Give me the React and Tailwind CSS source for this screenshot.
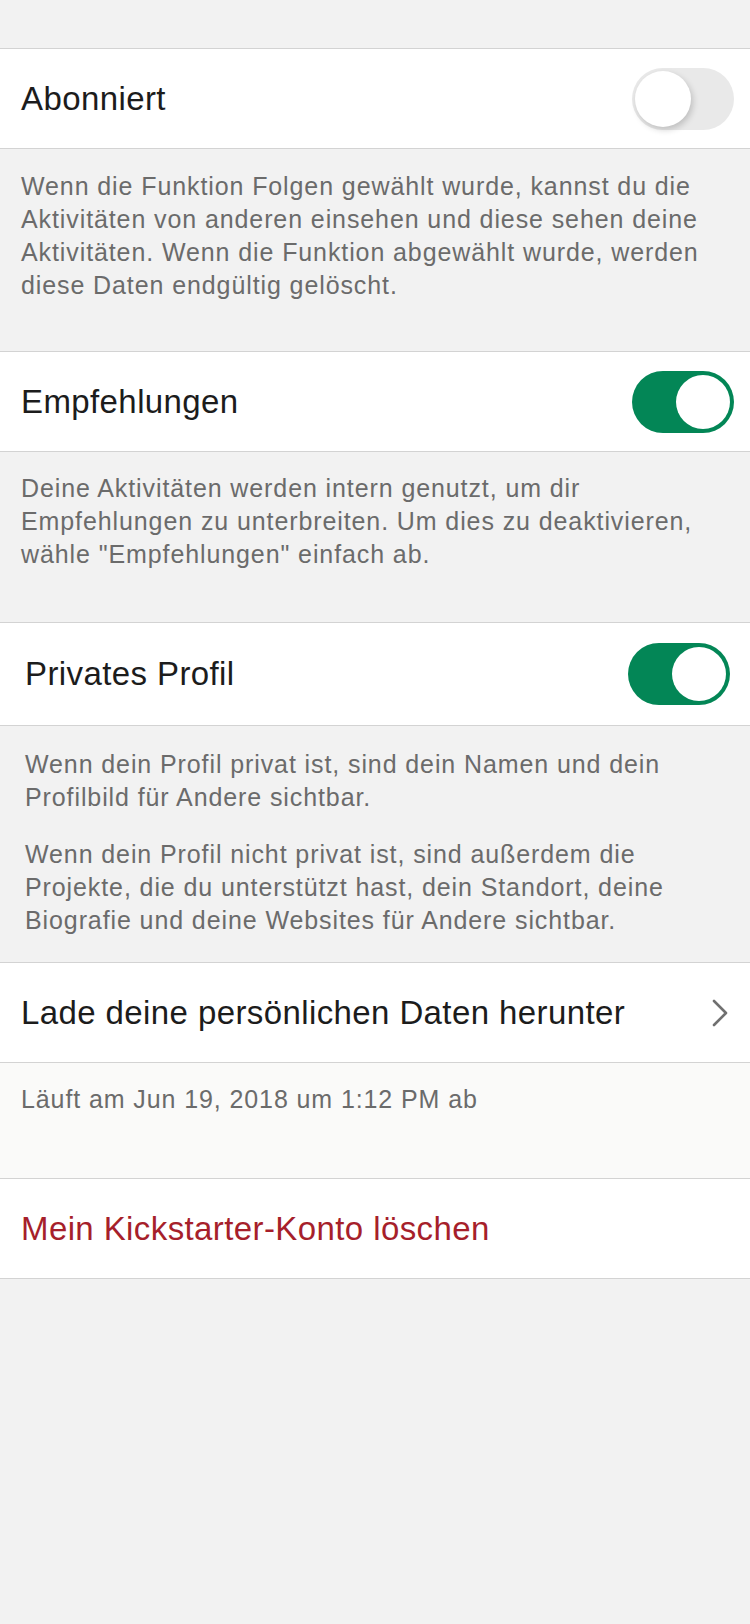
import React from "react";

function Toggle({ on }) {
  return on ? (
    <div className="w-[102px] h-[62px] rounded-full bg-[#038656] p-[4px] flex justify-end">
      <div className="h-[54px] w-[54px] rounded-full bg-white" />
    </div>
  ) : (
    <div className="w-[102px] h-[62px] rounded-full bg-[#e9e9e9] p-[3px] flex justify-start">
      <div className="h-[56px] w-[56px] rounded-full bg-white shadow-[2px_3px_6px_rgba(0,0,0,0.18)]" />
    </div>
  );
}

function Row({ children, className = "" }) {
  return (
    <div
      className={`h-[101px] bg-white border-y border-[#d3d3d3] flex items-center justify-between ${className}`}
    >
      {children}
    </div>
  );
}

const title = "text-[33px] tracking-[0.4px]";
const desc = "text-[25px] leading-[33px] text-[#6b6b6b] tracking-[0.9px]";

export default function App() {
  const font = { fontFamily: '"Liberation Sans", Arial, sans-serif' };

  return (
    <main
      className="min-h-[1624px] w-[750px] bg-[#f2f2f2] text-[#1c1c1c]"
      style={font}
    >
      <div className="h-[48px]" />

      {/* Abonniert */}
      <Row className="pl-[21px] pr-[16px]">
        <span className={title}>Abonniert</span>
        <Toggle on={false} />
      </Row>
      <div className={`pl-[21px] pr-[24px] pt-[21px] pb-[50px] ${desc}`}>
        Wenn die Funktion Folgen gewählt wurde, kannst du die Aktivitäten von
        anderen einsehen und diese sehen deine Aktivitäten. Wenn die Funktion
        abgewählt wurde, werden diese Daten endgültig gelöscht.
      </div>

      {/* Empfehlungen */}
      <Row className="-mt-px pl-[21px] pr-[16px]">
        <span className={title}>Empfehlungen</span>
        <Toggle on />
      </Row>
      <div className={`pl-[21px] pr-[24px] pt-[20px] pb-[51px] ${desc}`}>
        Deine Aktivitäten werden intern genutzt, um dir Empfehlungen zu
        unterbreiten. Um dies zu deaktivieren, wähle "Empfehlungen" einfach ab.
      </div>

      {/* Privates Profil */}
      <Row className="h-[104px] pl-[25px] pr-[20px]">
        <span className={title}>Privates Profil</span>
        <Toggle on />
      </Row>
      <div
        className={`pl-[25px] pr-[24px] pt-[22px] pb-[25px] flex flex-col gap-[24px] ${desc}`}
      >
        <p>
          Wenn dein Profil privat ist, sind dein Namen und dein Profilbild für
          Andere sichtbar.
        </p>
        <p>
          Wenn dein Profil nicht privat ist, sind außerdem die Projekte, die du
          unterstützt hast, dein Standort, deine Biografie und deine Websites
          für Andere sichtbar.
        </p>
      </div>

      {/* Download */}
      <Row className="pl-[21px] pr-[22px]">
        <span className={title}>Lade deine persönlichen Daten herunter</span>
        <svg width="16" height="28" viewBox="0 0 16 28" fill="none">
          <path
            d="M2 2 L14 14 L2 26"
            stroke="#707070"
            strokeWidth="2.6"
            strokeLinecap="round"
            strokeLinejoin="round"
          />
        </svg>
      </Row>
      <div className={`h-[115px] bg-[#fafaf9] pl-[21px] pt-[20px] ${desc}`}>
        Läuft am Jun 19, 2018 um 1:12 PM ab
      </div>

      {/* Delete */}
      <Row className="pl-[21px]">
        <span className={`${title} text-[#a61f2b]`}>
          Mein Kickstarter-Konto löschen
        </span>
      </Row>
    </main>
  );
}
